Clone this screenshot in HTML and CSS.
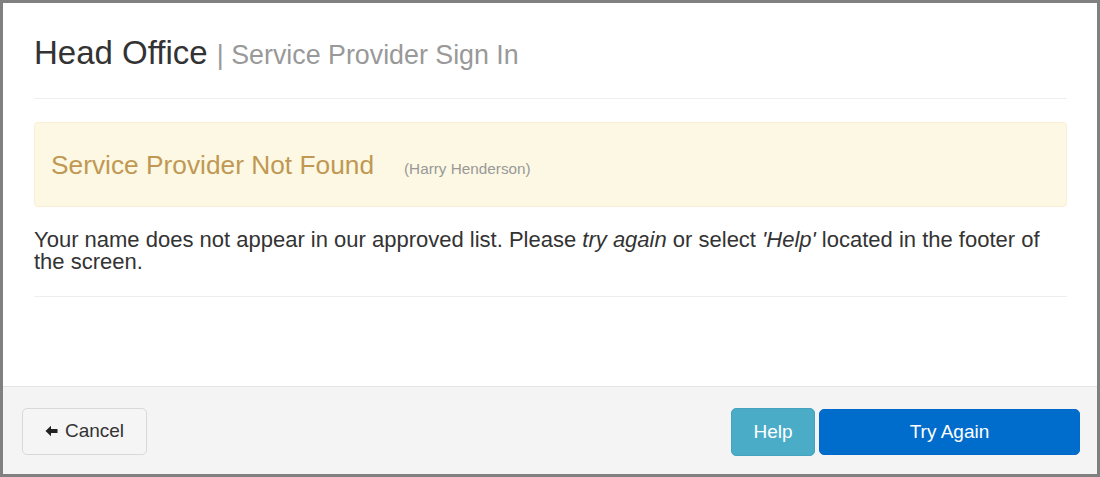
FILE: index.html
```html
<!DOCTYPE html>
<html lang="en">
<head>
    <meta charset="UTF-8">
    <meta name="viewport" content="width=device-width, initial-scale=1.0">
    <title>Service Provider Sign In</title>
    <link rel="stylesheet" href="styles.css">
</head>
<body>
    <div class="modal">
        <div class="modal-body">
            <h1 class="titulo">Head Office <small>| Service Provider Sign In</small></h1>
            <hr>

            <!-- Aviso de fornecedor nao encontrado -->
            <div class="alerta">
                <h3>Service Provider Not Found</h3>
                <span class="nome">(Harry Henderson)</span>
            </div>

            <p class="mensagem">Your name does not appear in our approved list. Please <em>try again</em> or select <em>'Help'</em> located in the footer of the screen.</p>
            <hr>
        </div>

        <div class="modal-footer">
            <button class="btn btn-default">
                <svg class="seta" width="13" height="12" viewBox="0 0 13 12">
                    <path d="M0.5 6 L6 0.8 L6 4 L12.5 4 L12.5 8 L6 8 L6 11.2 Z" fill="#222"/>
                </svg>
                Cancel
            </button>
            <div class="acoes">
                <button class="btn btn-info">Help</button>
                <button class="btn btn-primary">Try Again</button>
            </div>
        </div>
    </div>
</body>
</html>
```

FILE: styles.css
```css
* {
    margin: 0;
    padding: 0;
    box-sizing: border-box;
}

body {
    font-family: 'Liberation Sans', Arial, sans-serif;
    color: #333;
    background-color: #fff;
}

.modal {
    height: 477px;
    border: 3px solid #808080;
    display: flex;
    flex-direction: column;
    background-color: #fff;
}

.modal-body {
    flex: 1;
    padding: 32px 30px 0 31px;
}

.titulo {
    font-size: 33px;
    font-weight: normal;
    line-height: 36px;
    color: #333;
}

.titulo small {
    font-size: 26.8px;
    color: #999;
}

hr {
    border: none;
    border-top: 1px solid #eee;
    margin-top: 25px;
}

.alerta {
    margin-top: 23px;
    display: flex;
    align-items: baseline;
    padding: 28px 15px 26px 16px;
    background-color: #fcf8e3;
    border: 1px solid #fbeed5;
    border-radius: 4px;
}

.alerta h3 {
    font-size: 26.3px;
    font-weight: normal;
    line-height: 29px;
    color: #c09853;
}

.alerta .nome {
    margin-left: 30px;
    font-size: 15.3px;
    color: #999;
}

.mensagem {
    margin-top: 22px;
    font-size: 22px;
    line-height: 22px;
}

.mensagem + hr {
    margin-top: 23px;
}

.modal-footer {
    height: 88px;
    flex-shrink: 0;
    display: flex;
    align-items: center;
    justify-content: space-between;
    padding: 2px 17px 0 19px;
    background-color: #f4f4f4;
    border-top: 1px solid #e3e3e3;
}

.acoes {
    display: flex;
    align-items: center;
    gap: 4px;
}

.btn {
    font-family: 'Liberation Sans', Arial, sans-serif;
    font-size: 19px;
    border-radius: 5px;
    cursor: pointer;
    display: flex;
    align-items: center;
    justify-content: center;
}

.btn-default {
    width: 125px;
    height: 47px;
    background-color: #f5f5f5;
    border: 1px solid #d9d9d9;
    color: #333;
    gap: 7px;
    margin-top: -1px;
}

.seta {
    display: block;
}

.btn-info {
    width: 84px;
    height: 48px;
    background-color: #4bacc8;
    border: 1px solid #46a2bd;
    color: #fff;
}

.btn-primary {
    width: 261px;
    height: 46px;
    background-color: #006dcc;
    border: 1px solid #006acb;
    color: #fff;
}
```
